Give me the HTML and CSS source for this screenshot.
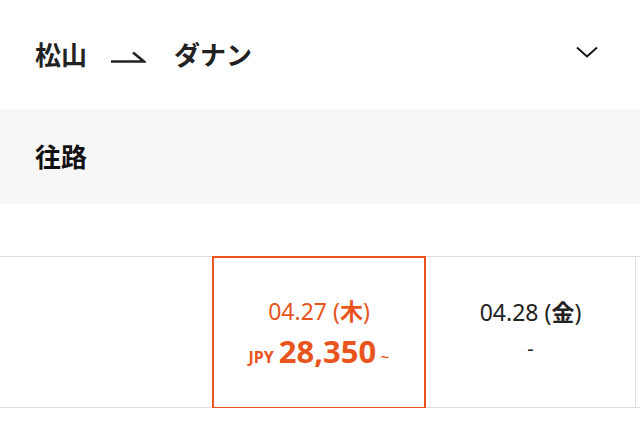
FILE: index.html
```html
<!DOCTYPE html>
<html lang="ja">
<head>
<meta charset="utf-8">
<link rel="stylesheet" href="styles.css">
</head>
<body>
<header class="route">
  <div class="route-title">
    <span class="city">松山</span>
    <svg class="route-arrow" width="36" height="14" viewBox="0 0 36 14" aria-hidden="true">
      <path d="M1 11.5 H34 L23 2.5" fill="none" stroke="#222" stroke-width="2.6" stroke-linejoin="miter"/>
    </svg>
    <span class="city">ダナン</span>
  </div>
  <svg class="chevron" width="22" height="12" viewBox="0 0 22 12" aria-hidden="true">
    <path d="M1 1.5 L11 10.5 L21 1.5" fill="none" stroke="#111" stroke-width="1.8"/>
  </svg>
</header>
<section class="leg">
  <h2 class="leg-title">往路</h2>
</section>
<div class="dates">
  <div class="date-cell"></div>
  <div class="date-cell selected">
    <div class="date">04.27 (<b>木</b>)</div>
    <div class="price"><span class="cur">JPY</span><span class="amount">28,350</span><span class="tilde">~</span></div>
  </div>
  <div class="date-cell bordered">
    <div class="date">04.28 (<b>金</b>)</div>
    <div class="price empty">-</div>
  </div>
  <div class="date-cell rest"></div>
</div>
</body>
</html>
```

FILE: styles.css
```css
html, body {
  margin: 0;
  padding: 0;
  background: #fff;
}
body {
  font-family: "Noto Sans", "Noto Sans CJK JP", sans-serif;
  color: #222;
  width: 640px;
  overflow: hidden;
}
.route {
  height: 109px;
  display: flex;
  align-items: center;
  justify-content: space-between;
  padding: 0 42px 6px 35px;
  box-sizing: border-box;
}
.route-title {
  display: flex;
  align-items: center;
  margin-top: 4px;
}
.city {
  font-family: "Noto Sans CJK JP", sans-serif;
  font-size: 26px;
  font-weight: 700;
  color: #222;
  line-height: 1;
}
.route-arrow {
  margin: 6px 28px 0 23px;
}
.chevron {
  display: block;
}
.leg {
  background: #f7f7f7;
  height: 95px;
  display: flex;
  align-items: center;
  padding-left: 35px;
}
.leg-title {
  margin: 0 0 2px;
  font-family: "Noto Sans CJK JP", sans-serif;
  font-size: 26px;
  font-weight: 700;
  color: #111;
}
.dates {
  margin-top: 52px;
  display: flex;
  height: 152px;
  border-top: 1px solid #dedede;
  border-bottom: 1px solid #dedede;
  box-sizing: border-box;
}
.date-cell {
  width: 212px;
  flex: none;
  display: flex;
  flex-direction: column;
  align-items: center;
  justify-content: center;
  box-sizing: border-box;
  padding-top: 6px;
}
.date-cell.selected {
  width: 214px;
  margin: -1px 0;
  height: 153px;
  border: 2px solid #e9541d;
  color: #e9541d;
}
.date-cell.bordered {
  width: 210px;
  border-right: 1px solid #dedede;
  justify-content: flex-start;
  padding-top: 40px;
}
.date-cell.rest {
  width: auto;
  flex: 1;
}
.date {
  font-size: 23px;
  line-height: 28px;
  font-weight: 400;
}
.date b {
  font-family: "Noto Sans CJK JP", sans-serif;
  font-weight: 700;
}
.price {
  display: flex;
  align-items: baseline;
  margin-top: 8px;
  line-height: 36px;
}
.cur {
  font-size: 16px;
  font-weight: 700;
  margin-right: 5px;
}
.amount {
  font-size: 31px;
  font-weight: 700;
  letter-spacing: 0;
}
.tilde {
  font-size: 16px;
  margin-left: 4px;
}
.price.empty {
  font-size: 20px;
  line-height: 28px;
  margin-top: 9px;
  color: #222;
}
```
